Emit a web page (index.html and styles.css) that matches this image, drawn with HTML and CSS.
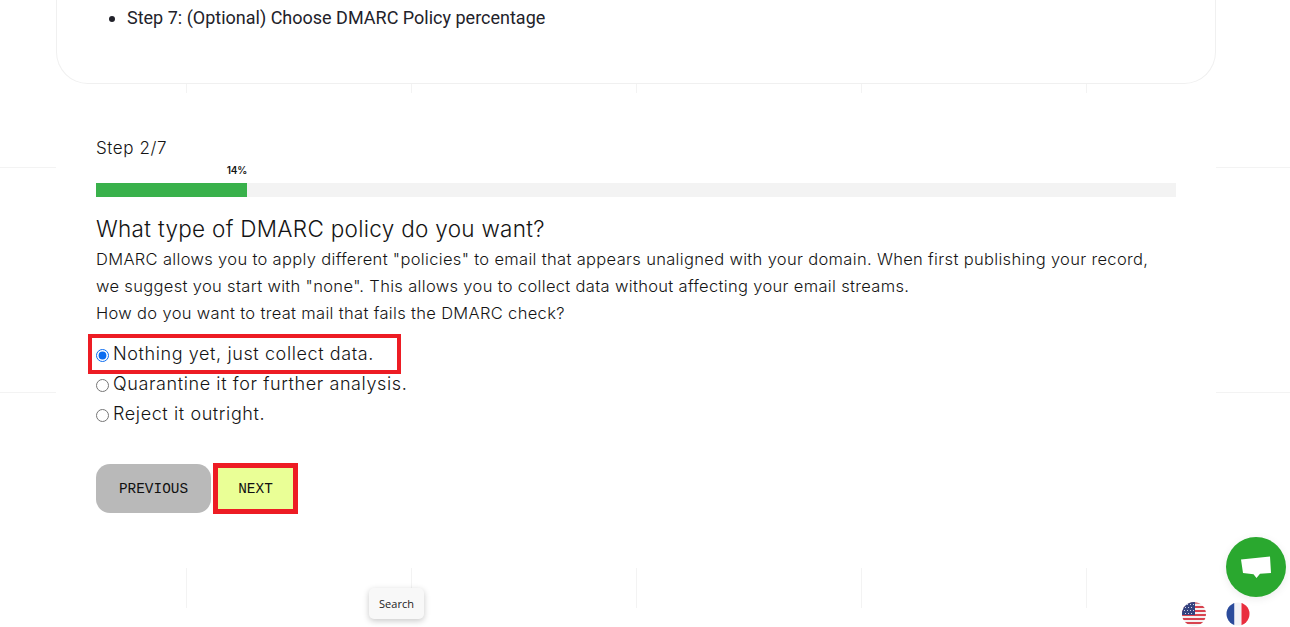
FILE: index.html
```html
<!DOCTYPE html>
<html lang="en">
<head>
<meta charset="utf-8">
<title>DMARC wizard</title>
<link rel="stylesheet" href="styles.css">
</head>
<body>
<div class="page">
  <section class="intro-card">
    <ul class="intro-list">
      <li>Step 7: (Optional) Choose DMARC Policy percentage</li>
    </ul>
  </section>
  <main class="wizard">
    <p class="step-label">Step 2/7</p>
    <div class="progress-value"><span>14%</span></div>
    <div class="progress-track"><div class="progress-fill"></div></div>
    <h2 class="question">What type of DMARC policy do you want?</h2>
    <p class="description">DMARC allows you to apply different "policies" to email that appears unaligned with your domain. When first publishing your record, we suggest you start with "none". This allows you to collect data without affecting your email streams.<br>How do you want to treat mail that fails the DMARC check?</p>
    <form class="options">
      <label class="option option-marked"><input type="radio" name="policy" checked><span>Nothing yet, just collect data.</span></label>
      <label class="option"><input type="radio" name="policy"><span>Quarantine it for further analysis.</span></label>
      <label class="option"><input type="radio" name="policy"><span>Reject it outright.</span></label>
    </form>
    <div class="actions">
      <button type="button" class="btn btn-prev">PREVIOUS</button>
      <button type="button" class="btn btn-next">NEXT</button>
    </div>
  </main>
</div>
<div class="search-tip">Search</div>
<button type="button" class="chat" aria-label="Chat">
  <svg width="32" height="26" viewBox="0 0 32 26"><path fill="#fff" d="M1 5.500 30 2.500 31 19 20 19.800 16.500 24 13.500 20.200 3 19Z"/></svg>
</button>
<div class="flags">
  <svg class="flag" width="24" height="24" viewBox="0 0 24 24">
    <defs><clipPath id="c1"><circle cx="12" cy="12" r="12"/></clipPath></defs>
    <g clip-path="url(#c1)">
      <rect width="24" height="24" fill="#f4f1f1"/>
      <rect y="0" width="24" height="2" fill="#d9808a"/>
      <rect y="4" width="24" height="2" fill="#d8434f"/>
      <rect y="8" width="24" height="2" fill="#d8434f"/>
      <rect y="12" width="24" height="2" fill="#d8434f"/>
      <rect y="16" width="24" height="2" fill="#d8434f"/>
      <rect y="20" width="24" height="2" fill="#d8434f"/>
      <rect width="13" height="13" fill="#34437f"/>
      <g fill="#cfd3e6">
        <rect x="2" y="2" width="1" height="1"/><rect x="5" y="2" width="1" height="1"/><rect x="8" y="2" width="1" height="1"/><rect x="11" y="2" width="1" height="1"/>
        <rect x="3" y="5" width="1" height="1"/><rect x="6" y="5" width="1" height="1"/><rect x="9" y="5" width="1" height="1"/>
        <rect x="2" y="8" width="1" height="1"/><rect x="5" y="8" width="1" height="1"/><rect x="8" y="8" width="1" height="1"/><rect x="11" y="8" width="1" height="1"/>
        <rect x="3" y="11" width="1" height="1"/><rect x="6" y="11" width="1" height="1"/><rect x="9" y="11" width="1" height="1"/>
      </g>
    </g>
  </svg>
  <svg class="flag" width="24" height="24" viewBox="0 0 24 24">
    <defs><clipPath id="c2"><circle cx="12" cy="12" r="11.500"/></clipPath></defs>
    <g clip-path="url(#c2)">
      <rect width="8.500" height="24" fill="#2b4b9b"/>
      <rect x="8.500" width="7" height="24" fill="#f2f2f6"/>
      <rect x="15.500" width="8.500" height="24" fill="#e92e3e"/>
    </g>
  </svg>
</div>
```

FILE: styles.css
```css
* { box-sizing: border-box; }
html, body { margin: 0; height: 627px; overflow: hidden; }
body {
  position: relative;
  background-color: #fff;
  color: #141414;
  font-family: Inter, "Liberation Sans", sans-serif;
  background-image:
    linear-gradient(#f3f3f3, #f3f3f3),
    linear-gradient(#f3f3f3, #f3f3f3),
    repeating-linear-gradient(90deg, transparent 0 186px, #f3f3f3 186px 187px, transparent 187px 225px);
  background-size: 100% 1px, 100% 1px, 100% 524px;
  background-position: 0 167px, 0 392px, 0 84px;
  background-repeat: no-repeat;
}
.page {
  width: 1160px;
  height: 568px;
  margin-left: 56px;
}
.intro-card {
  height: 84px;
  border: 1px solid #f0f0f0;
  border-top: 0;
  border-radius: 0 0 32px 32px;
  background: #fff;
  padding-top: 7px;
}
.intro-list {
  margin: 0;
  padding-left: 70px;
  font: 400 18px/22px Roboto, sans-serif;
  color: #22222a;
}
.wizard { margin-top: 9px; height: 475px; padding: 0 40px; background: #fff; display: flow-root; }
.step-label { margin: 0; padding-top: 44px; font-size: 17px; line-height: 22px; font-weight: 350; letter-spacing: 0.6px; }
.progress-value { width: 151px; height: 21px; padding-top: 4px; text-align: right; font-size: 10px; line-height: 14px; font-weight: 600; letter-spacing: -0.2px; }
.progress-track { height: 14px; margin-top: 3px; background: #f3f3f3; }
.progress-fill { width: 151px; height: 14px; background: #39b14b; }
.question { margin: 18px 0 0; font-size: 22.500px; font-weight: 350; line-height: 27px; letter-spacing: 0.3px; }
.description { margin: 4px 0 0; max-width: 1065px; font-size: 16.500px; line-height: 27px; font-weight: 350; letter-spacing: 0.33px; }
.options { margin-top: 11px; display: flex; flex-direction: column; }
.option { display: flex; align-items: center; height: 30px; font-size: 18px; font-weight: 350; letter-spacing: 0.6px; position: relative; }
.option input { width: 13px; height: 13px; margin: 4px 4px 0 0; accent-color: #0b6cf0; }
.option-marked::before {
  content: "";
  position: absolute;
  left: -8px;
  top: -4px;
  width: 305px;
  height: 32px;
  border: 4px solid #ed1c24;
}
.actions { display: flex; gap: 2px; margin-top: 36px; }
.btn {
  height: 49px;
  border: 0;
  font: 400 14.400px "Liberation Mono", monospace;
  color: #111;
  padding: 0;
}
.btn-prev { width: 115px; background: #b9b9b9; border-radius: 14px; }
.btn-next { width: 85px; margin-top: -1px; height: 51px; background: #eaff96; border: 5px solid #ed1c24; }
.search-tip {
  position: absolute;
  left: 369px;
  top: 588px;
  width: 55px;
  height: 31px;
  background: #f8f8f8;
  border-radius: 5px;
  box-shadow: 0 2px 6px rgba(0,0,0,.22);
  font: 400 11px/31px "Open Sans", sans-serif;
  text-align: center;
  color: #222;
}
.chat {
  position: absolute;
  left: 1226px;
  top: 537px;
  width: 60px;
  height: 60px;
  border: 0;
  border-radius: 50%;
  padding: 0;
  background: #2aa82f;
  box-shadow: 0 2px 8px rgba(0,0,0,.08);
  display: flex;
  align-items: center;
  justify-content: center;
}
.flags { position: absolute; left: 1182px; top: 602px; display: flex; gap: 20px; }
```
